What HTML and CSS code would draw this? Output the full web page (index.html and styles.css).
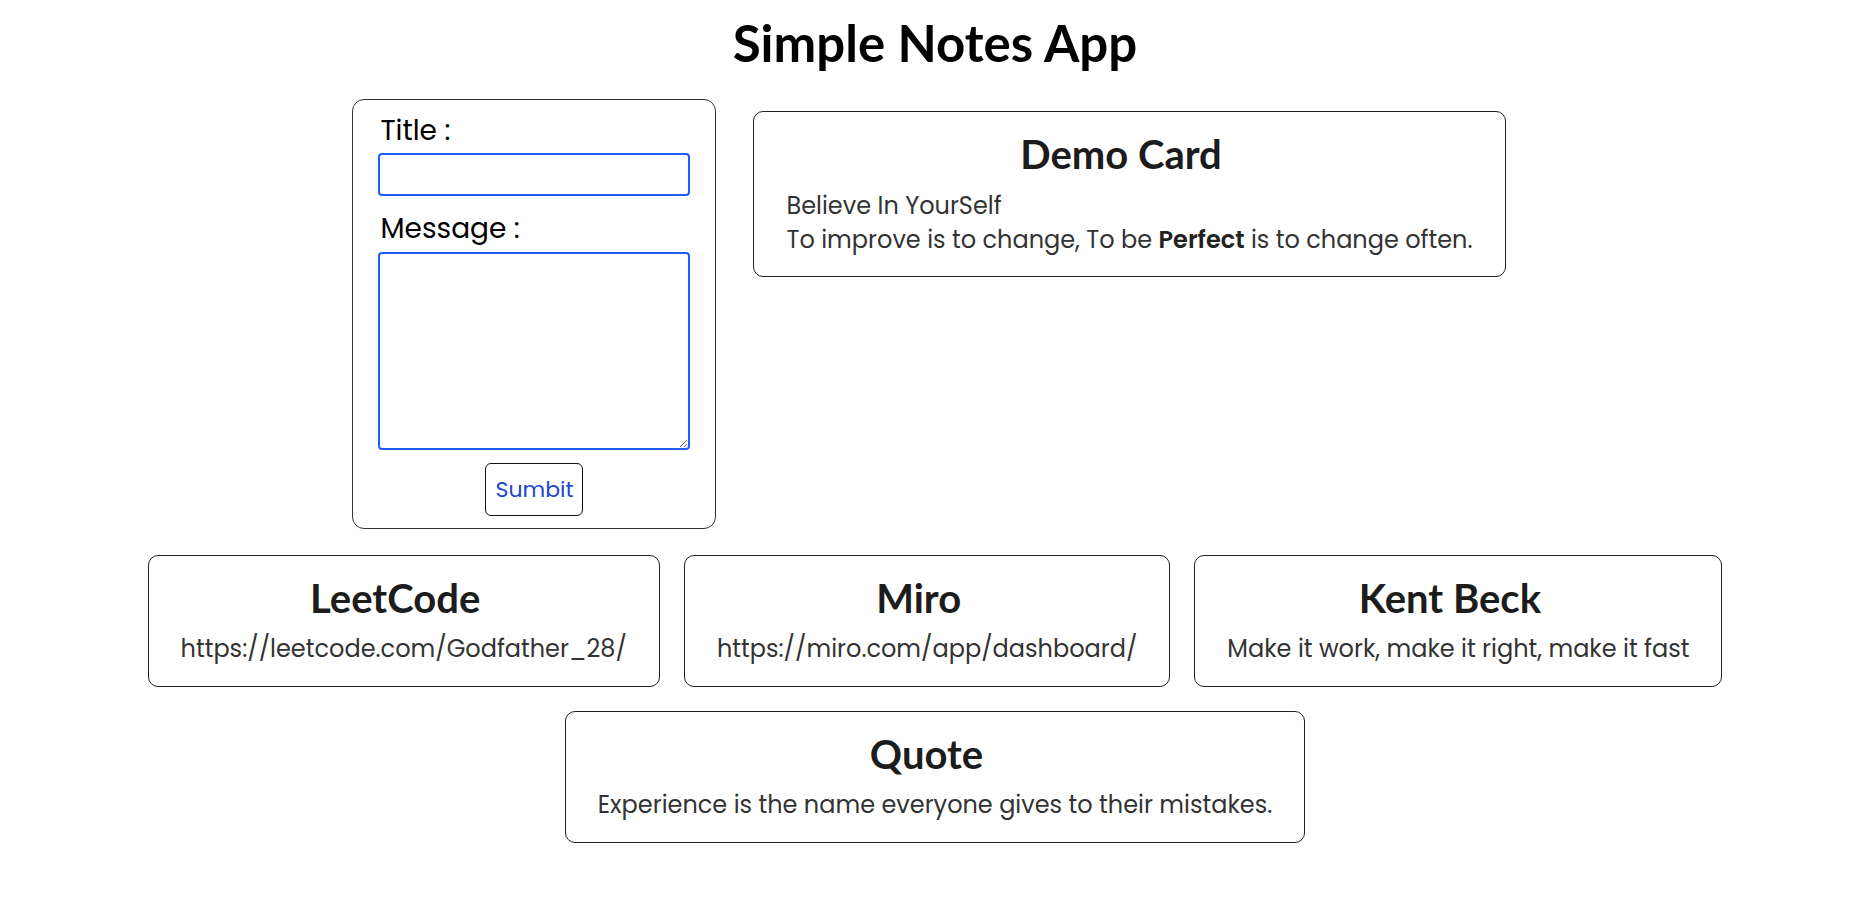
FILE: index.html
```html
<!DOCTYPE html>
<html lang="en">
<head>
<meta charset="utf-8">
<title>Simple Notes App</title>
<link rel="stylesheet" href="styles.css">
</head>
<body>
  <h1 class="app-title">Simple Notes App</h1>
  <div class="row row-top">
    <form class="note-form">
      <label class="form-label" for="title">Title :</label>
      <input class="form-input" id="title" type="text">
      <label class="form-label label-message" for="message">Message :</label>
      <textarea class="form-textarea" id="message"></textarea>
      <button class="submit-btn" type="button">Sumbit</button>
    </form>
    <div class="card demo-card">
      <h2 class="card-title">Demo Card</h2>
      <div class="card-body demo-body">
        <div>Believe In YourSelf</div>
        <div>To improve is to change, To be <b>Perfect</b> is to change often.</div>
      </div>
    </div>
  </div>
  <div class="row">
    <div class="card">
      <h2 class="card-title">LeetCode</h2>
      <div class="card-body">https://leetcode.com/Godfather_28/</div>
    </div>
    <div class="card">
      <h2 class="card-title">Miro</h2>
      <div class="card-body">https://miro.com/app/dashboard/</div>
    </div>
    <div class="card">
      <h2 class="card-title">Kent Beck</h2>
      <div class="card-body">Make it work, make it right, make it fast</div>
    </div>
  </div>
  <div class="row">
    <div class="card">
      <h2 class="card-title">Quote</h2>
      <div class="card-body">Experience is the name everyone gives to their mistakes.</div>
    </div>
  </div>
</body>
</html>
```

FILE: styles.css
```css
* { box-sizing: border-box; }

body {
  margin: 0;
  background: #ffffff;
  font-family: "Poppins", "Open Sans", sans-serif;
  color: #333333;
}

.app-title {
  margin: 12px 0 26px;
  font-family: "Lato", sans-serif;
  font-weight: 700;
  font-size: 51px;
  line-height: 61px;
  text-align: center;
  color: #000000;
}

.row {
  display: flex;
  justify-content: center;
  align-items: flex-start;
}

.row-top {
  margin-bottom: 14px;
}

.note-form {
  width: 364px;
  margin-right: 25px;
  padding: 15px 25px 12px;
  border: 1px solid #333333;
  border-radius: 12px;
  display: flex;
  flex-direction: column;
}

.form-label {
  font-size: 28px;
  line-height: 32px;
  color: #000000;
  padding-left: 2px;
}

.form-input {
  margin-top: 6px;
  height: 43px;
  border: 2px solid #1f5cff;
  border-radius: 4px;
  outline: none;
  font-family: inherit;
  font-size: 18px;
}

.label-message {
  margin-top: 17px;
}

.form-textarea {
  margin-top: 7px;
  height: 198px;
  border: 2px solid #1f5cff;
  border-radius: 4px;
  outline: none;
  font-family: inherit;
  font-size: 18px;
}

.submit-btn {
  align-self: center;
  margin-top: 13px;
  height: 53px;
  padding: 0 9px;
  background: #ffffff;
  border: 1px solid #111111;
  border-radius: 6px;
  font-family: inherit;
  font-size: 22px;
  color: #2146d0;
}

.card {
  margin: 12px;
  padding: 18px 32px 20px;
  border: 1px solid #222222;
  border-radius: 10px;
}

.card-title {
  margin: 0;
  padding-right: 17px;
  font-family: "Lato", sans-serif;
  font-weight: 700;
  font-size: 40px;
  line-height: 48px;
  text-align: center;
  color: #1c1c1c;
}

.card-body {
  margin-top: 10px;
  font-size: 24px;
  line-height: 34px;
  text-align: center;
  color: #333333;
}

.demo-card {
  margin-left: 12px;
  padding-bottom: 19px;
}

.demo-body {
  margin-top: 11px;
  text-align: left;
}

.demo-body b {
  font-weight: 600;
  color: #222222;
}
```
